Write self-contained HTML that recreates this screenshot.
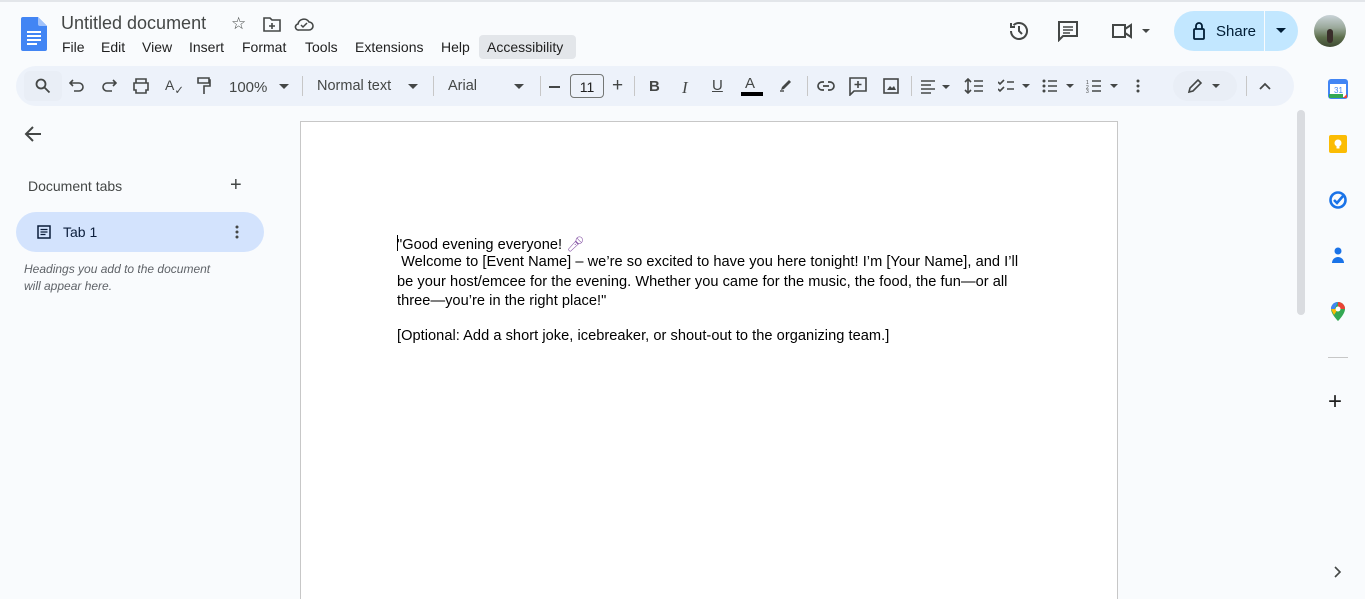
<!DOCTYPE html>
<html><head><meta charset="utf-8"><style>
*{margin:0;padding:0;box-sizing:border-box}
html,body{width:1365px;height:599px;overflow:hidden}
body{background:#f9fbfd;font-family:"Liberation Sans",Arial,sans-serif;color:#1f1f1f;position:relative}
.a{position:absolute}
.menu span{position:absolute;font-size:14px;white-space:nowrap}
.tb{left:16px;top:66px;width:1278px;height:40px;background:#edf2fa;border-radius:20px}
.ic{position:absolute;color:#444746;font-size:15px}
.sep{position:absolute;top:76px;width:1px;height:20px;background:#c7c7c7}
.doc{position:absolute;left:300px;top:121px;width:818px;height:478px;background:#fff;border:1px solid #c7c7c7;border-bottom:none}
.p{position:absolute;left:397px;font-size:14.6px;color:#000;white-space:nowrap;letter-spacing:0.04px}
svg{position:absolute}
</style></head><body>
<div class="a" style="left:0;top:0;width:1365px;height:2px;background:#e3e6ea"></div>
<svg style="left:21px;top:17px" width="26" height="34" viewBox="0 0 26 34"><path d="M2 0h15l9 9v23a2 2 0 0 1-2 2H2a2 2 0 0 1-2-2V2a2 2 0 0 1 2-2z" fill="#4285f4"/><path d="M17 0l9 9h-7a2 2 0 0 1-2-2z" fill="#a1c2fa"/><rect x="6" y="14" width="14" height="2" fill="#fff"/><rect x="6" y="18" width="14" height="2" fill="#fff"/><rect x="6" y="22" width="14" height="2" fill="#fff"/><rect x="6" y="26" width="10" height="2" fill="#fff"/></svg>
<div class="a" style="left:61px;top:13px;font-size:18px;color:#444746">Untitled document</div>
<div class="a" style="left:231px;top:14px;font-size:17px;color:#444746">☆</div>
<svg style="left:263px;top:17px" width="18" height="15" viewBox="0 0 18 15"><path d="M1 1h6l2 2h8v11H1z" fill="none" stroke="#444746" stroke-width="1.6"/><path d="M6 9h6M9 6v6" stroke="#444746" stroke-width="1.6"/></svg>
<svg style="left:294px;top:17px" width="20" height="14" viewBox="0 0 20 14"><path d="M5 13h10a4 4 0 0 0 0-8 6 6 0 0 0-11 2 3 3 0 0 0 1 6z" fill="none" stroke="#444746" stroke-width="1.6"/><path d="M7 8l2 2 4-4" fill="none" stroke="#444746" stroke-width="1.5"/></svg>
<div class="a menu" style="left:0;top:39px;color:#1f1f1f"><span style="left:62px">File</span><span style="left:101px">Edit</span><span style="left:142px">View</span><span style="left:189px">Insert</span><span style="left:242px">Format</span><span style="left:305px">Tools</span><span style="left:355px">Extensions</span><span style="left:441px">Help</span></div>
<div class="a" style="left:479px;top:35px;width:97px;height:24px;background:#e3e6ea;border-radius:4px;font-size:14px;padding:4px 0 0 8px">Accessibility</div>
<svg style="left:1007px;top:19px" width="24" height="24" viewBox="0 0 24 24"><path d="M4 12a8 8 0 1 0 2.5-5.8M4 4v4h4" fill="none" stroke="#444746" stroke-width="2"/><path d="M12 7v5l3 3" fill="none" stroke="#444746" stroke-width="2"/></svg>
<svg style="left:1057px;top:20px" width="22" height="22" viewBox="0 0 22 22"><path d="M2 2h18v14H6l-4 4z" fill="none" stroke="#444746" stroke-width="2"/><path d="M6 7h10M6 10h10M6 13h7" stroke="#444746" stroke-width="1.6"/></svg>
<svg style="left:1111px;top:22px" width="40" height="18" viewBox="0 0 40 18"><path d="M2 3h12v12H2zM14 7l6-4v12l-6-4" fill="none" stroke="#444746" stroke-width="2"/><path d="M31 7h8l-4 4z" fill="#444746"/></svg>
<div class="a" style="left:1174px;top:11px;width:124px;height:40px;background:#c2e7ff;border-radius:20px"></div>
<div class="a" style="left:1264px;top:11px;width:1px;height:40px;background:#f9fbfd"></div>
<svg style="left:1192px;top:22px" width="14" height="18" viewBox="0 0 14 18"><rect x="2" y="7" width="10" height="10" rx="1" fill="none" stroke="#001d35" stroke-width="1.8"/><path d="M4 7V4a3 3 0 0 1 6 0v3" fill="none" stroke="#001d35" stroke-width="1.8"/></svg>
<div class="a" style="left:1216px;top:23px;font-size:15px;color:#001d35">Share</div>
<svg style="left:1276px;top:28px" width="10" height="6"><path d="M0 0h10L5 5z" fill="#001d35"/></svg>
<div class="a" style="left:1314px;top:15px;width:32px;height:32px;border-radius:50%;overflow:hidden;background:linear-gradient(180deg,#c9d3d8 0%,#9aa89a 40%,#5d6f4c 70%,#3f4a33 100%)"><div class="a" style="left:13px;top:14px;width:6px;height:14px;background:#3a2e2a;border-radius:3px"></div></div>
<div class="a tb"></div>
<div class="a" style="left:24px;top:71px;width:38px;height:30px;background:#e9eef6;border-radius:6px"></div>
<svg style="left:35px;top:78px" width="16" height="16" viewBox="0 0 16 16"><circle cx="6" cy="6" r="4.5" fill="none" stroke="#444746" stroke-width="1.8"/><path d="M9.5 9.5l5 5" stroke="#444746" stroke-width="1.8"/></svg>
<svg style="left:69px;top:79px" width="16" height="14" viewBox="0 0 16 14"><path d="M4 1L1 4l3 3M1 4h9a4 4 0 0 1 0 8H5" fill="none" stroke="#444746" stroke-width="1.6"/></svg>
<svg style="left:101px;top:79px" width="16" height="14" viewBox="0 0 16 14"><path d="M12 1l3 3-3 3M15 4H6a4 4 0 0 0 0 8h5" fill="none" stroke="#444746" stroke-width="1.6"/></svg>
<svg style="left:132px;top:78px" width="18" height="16" viewBox="0 0 18 16"><path d="M4 5V1h10v4M2 5h14v7h-2v3H4v-3H2z" fill="none" stroke="#444746" stroke-width="1.6"/></svg>
<div class="ic" style="left:165px;top:77px;font-size:14px">A<sub>✓</sub></div>
<svg style="left:197px;top:77px" width="14" height="18" viewBox="0 0 14 18"><path d="M1 1h11v5H1zM12 3h1v6H7v8" fill="none" stroke="#444746" stroke-width="1.6"/></svg>
<div class="ic" style="left:229px;top:79px;font-size:15px">100%</div>
<svg style="left:279px;top:84px" width="10" height="5"><path d="M0 0h10L5 5z" fill="#444746"/></svg>
<div class="sep" style="left:302px"></div>
<div class="ic" style="left:317px;top:78px;font-size:14.5px">Normal text</div>
<svg style="left:408px;top:84px" width="10" height="5"><path d="M0 0h10L5 5z" fill="#444746"/></svg>
<div class="sep" style="left:433px"></div>
<div class="ic" style="left:448px;top:78px;font-size:14.5px">Arial</div>
<svg style="left:514px;top:84px" width="10" height="5"><path d="M0 0h10L5 5z" fill="#444746"/></svg>
<div class="sep" style="left:540px"></div>
<div class="a" style="left:549px;top:86px;width:11px;height:2px;background:#444746"></div>
<div class="a" style="left:570px;top:74px;width:34px;height:24px;border:1px solid #747775;border-radius:4px;font-size:14px;text-align:center;padding-top:4px">11</div>
<div class="ic" style="left:612px;top:75px;font-size:19px">+</div>
<div class="sep" style="left:634px"></div>
<div class="ic" style="left:649px;top:78px;font-weight:bold">B</div>
<div class="ic" style="left:682px;top:78px;font-style:italic;font-family:'Liberation Serif',serif;font-size:17px">I</div>
<div class="ic" style="left:712px;top:77px;text-decoration:underline">U</div>
<div class="ic" style="left:745px;top:75px">A</div>
<div class="a" style="left:741px;top:92px;width:22px;height:4px;background:#000"></div>
<svg style="left:779px;top:77px" width="14" height="15" viewBox="0 0 14 15"><path d="M3 10l7-7 2 2-7 7-3 1z" fill="#444746"/><path d="M1 14h4" stroke="#444746" stroke-width="1.4"/></svg>
<div class="sep" style="left:807px"></div>
<svg style="left:817px;top:80px" width="18" height="12" viewBox="0 0 18 12"><path d="M7 2H5a4 4 0 0 0 0 8h2M11 2h2a4 4 0 0 1 0 8h-2M6 6h6" fill="none" stroke="#444746" stroke-width="1.7"/></svg>
<svg style="left:849px;top:77px" width="18" height="19" viewBox="0 0 18 19"><path d="M1 1h16v13H5l-4 4z" fill="none" stroke="#444746" stroke-width="1.6"/><path d="M9 4v7M5.5 7.5h7" stroke="#444746" stroke-width="1.6"/></svg>
<svg style="left:883px;top:78px" width="16" height="16" viewBox="0 0 16 16"><rect x="1" y="1" width="14" height="14" fill="none" stroke="#444746" stroke-width="1.6"/><path d="M4 12l3-4 2 2 2-2 2 4z" fill="#444746"/></svg>
<div class="sep" style="left:911px"></div>
<svg style="left:921px;top:80px" width="32" height="14" viewBox="0 0 32 14"><path d="M0 1h14M0 5h10M0 9h14M0 13h10" stroke="#444746" stroke-width="1.6"/><path d="M21 5h8l-4 4z" fill="#444746"/></svg>
<svg style="left:964px;top:78px" width="20" height="16" viewBox="0 0 20 16"><path d="M4 1v14M1 4l3-3 3 3M1 12l3 3 3-3M10 3h9M10 8h9M10 13h9" fill="none" stroke="#444746" stroke-width="1.6"/></svg>
<svg style="left:998px;top:79px" width="34" height="14" viewBox="0 0 34 14"><path d="M0 3l2 2 4-4M0 10l2 2 4-4M9 3h7M9 10h7" fill="none" stroke="#444746" stroke-width="1.6"/><path d="M24 5h8l-4 4z" fill="#444746"/></svg>
<svg style="left:1042px;top:79px" width="34" height="14" viewBox="0 0 34 14"><circle cx="2" cy="2" r="1.5" fill="#444746"/><circle cx="2" cy="7" r="1.5" fill="#444746"/><circle cx="2" cy="12" r="1.5" fill="#444746"/><path d="M6 2h9M6 7h9M6 12h9" stroke="#444746" stroke-width="1.6"/><path d="M24 5h8l-4 4z" fill="#444746"/></svg>
<svg style="left:1086px;top:79px" width="34" height="14" viewBox="0 0 34 14"><path d="M6 2h9M6 7h9M6 12h9" stroke="#444746" stroke-width="1.6"/><text x="0" y="5" font-size="5" fill="#444746">1</text><text x="0" y="10" font-size="5" fill="#444746">2</text><text x="0" y="14" font-size="5" fill="#444746">3</text><path d="M24 5h8l-4 4z" fill="#444746"/></svg>
<svg style="left:1136px;top:79px" width="4" height="14"><circle cx="2" cy="2" r="1.5" fill="#444746"/><circle cx="2" cy="7" r="1.5" fill="#444746"/><circle cx="2" cy="12" r="1.5" fill="#444746"/></svg>
<div class="a" style="left:1173px;top:71px;width:64px;height:30px;background:#e9eef6;border-radius:15px"></div>
<svg style="left:1187px;top:78px" width="36" height="16" viewBox="0 0 36 16"><path d="M2 14l1-4 8-8 3 3-8 8z" fill="none" stroke="#444746" stroke-width="1.6"/><path d="M25 6h8l-4 4z" fill="#444746"/></svg>
<div class="sep" style="left:1246px"></div>
<svg style="left:1259px;top:82px" width="12" height="8"><path d="M1 7l5-5 5 5" fill="none" stroke="#444746" stroke-width="1.8"/></svg>
<svg style="left:24px;top:125px" width="18" height="18" viewBox="0 0 18 18"><path d="M17 9H2M9 2L2 9l7 7" fill="none" stroke="#444746" stroke-width="2"/></svg>
<div class="a" style="left:28px;top:178px;font-size:14px;color:#444746">Document tabs</div>
<div class="a" style="left:230px;top:174px;font-size:20px;color:#444746">+</div>
<div class="a" style="left:16px;top:212px;width:248px;height:40px;background:#d3e3fd;border-radius:20px"></div>
<svg style="left:37px;top:225px" width="14" height="14" viewBox="0 0 14 14"><rect x="1" y="1" width="12" height="12" fill="none" stroke="#0b1d3a" stroke-width="1.5"/><path d="M3.5 4.5h7M3.5 7h7M3.5 9.5h5" stroke="#0b1d3a" stroke-width="1.3"/></svg>
<div class="a" style="left:63px;top:224px;font-size:14px;color:#0b1d3a">Tab 1</div>
<svg style="left:235px;top:225px" width="4" height="14"><circle cx="2" cy="2" r="1.5" fill="#444746"/><circle cx="2" cy="7" r="1.5" fill="#444746"/><circle cx="2" cy="12" r="1.5" fill="#444746"/></svg>
<div class="a" style="left:24px;top:261px;font-size:12px;font-style:italic;color:#5f6368;line-height:17px">Headings you add to the document<br>will appear here.</div>
<div class="doc"></div>
<div class="a" style="left:397px;top:235px;width:1px;height:16px;background:#000"></div>
<div class="p" style="top:235px">"Good evening everyone! <span style="color:#8a5aa8">🎤︎</span></div>
<div class="p" style="top:254px">&nbsp;Welcome to [Event Name] – we’re so excited to have you here tonight! I’m [Your Name], and I’ll</div>
<div class="p" style="top:274px">be your host/emcee for the evening. Whether you came for the music, the food, the fun—or all</div>
<div class="p" style="top:293px">three—you’re in the right place!"</div>
<div class="p" style="top:328px">[Optional: Add a short joke, icebreaker, or shout-out to the organizing team.]</div>
<div class="a" style="left:1297px;top:110px;width:8px;height:205px;background:#dadce0;border-radius:4px"></div>
<svg style="left:1328px;top:79px" width="20" height="20" viewBox="0 0 20 20"><rect x="1" y="1" width="18" height="18" rx="2" fill="#fff" stroke="#4285f4" stroke-width="2"/><rect x="1" y="1" width="18" height="4" fill="#4285f4"/><path d="M15 19h4v-4z" fill="#ea4335"/><rect x="1" y="15" width="14" height="4" fill="#34a853"/><text x="6" y="14" font-size="8" fill="#4285f4" font-family="Liberation Sans">31</text></svg>
<svg style="left:1328px;top:134px" width="20" height="20" viewBox="0 0 20 20"><rect x="1" y="1" width="18" height="18" rx="2" fill="#fbbc04"/><circle cx="10" cy="9" r="3.5" fill="#fff"/><rect x="8.5" y="12" width="3" height="2.5" fill="#fff"/></svg>
<svg style="left:1328px;top:190px" width="20" height="20" viewBox="0 0 20 20"><circle cx="10" cy="10" r="7.5" fill="none" stroke="#1a73e8" stroke-width="2.6"/><path d="M6 10l3 3 6-7" fill="none" stroke="#1a73e8" stroke-width="2.6"/></svg>
<svg style="left:1329px;top:246px" width="18" height="18" viewBox="0 0 18 18"><circle cx="9" cy="5" r="3.5" fill="#1a73e8"/><path d="M3 17a6 6 0 0 1 12 0z" fill="#1a73e8"/></svg>
<svg style="left:1330px;top:302px" width="16" height="20" viewBox="0 0 16 20"><path d="M8 19s7-7 7-12A7 7 0 0 0 1 7c0 5 7 12 7 12z" fill="#34a853"/><path d="M1 7a7 7 0 0 1 7-7l-4 8z" fill="#4285f4"/><path d="M8 0a7 7 0 0 1 7 7H8z" fill="#ea4335"/><path d="M1 7h7l-4 6z" fill="#fbbc04"/><circle cx="8" cy="7" r="2.5" fill="#fff"/></svg>
<div class="a" style="left:1328px;top:357px;width:20px;height:1px;background:#c7c7c7"></div>
<div class="a" style="left:1328px;top:388px;font-size:24px;color:#1f1f1f">+</div>
<svg style="left:1334px;top:566px" width="8" height="12"><path d="M1 1l5 5-5 5" fill="none" stroke="#444746" stroke-width="1.6"/></svg>
</body></html>
